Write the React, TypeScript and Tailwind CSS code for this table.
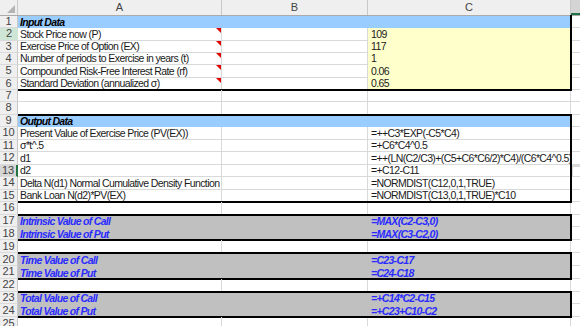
import React from "react";

type Row = {
  a?: string;
  c?: string;
  kind?: "head" | "input" | "plain" | "total";
};

const rows: Row[] = [
  { a: "Input Data", kind: "head" },
  { a: "Stock Price now (P)", c: "109", kind: "input" },
  { a: "Exercise Price of Option (EX)", c: "117", kind: "input" },
  { a: "Number of periods to Exercise in years (t)", c: "1", kind: "input" },
  { a: "Compounded Risk-Free Interest Rate (rf)", c: "0.06", kind: "input" },
  { a: "Standard Deviation (annualized σ)", c: "0.65", kind: "input" },
  {},
  {},
  { a: "Output Data", kind: "head" },
  { a: "Present Value of Exercise Price (PV(EX))", c: "=++C3*EXP(-C5*C4)", kind: "plain" },
  { a: "σ*t^.5", c: "=+C6*C4^0.5", kind: "plain" },
  { a: "d1", c: "=++(LN(C2/C3)+(C5+C6*C6/2)*C4)/(C6*C4^0.5)", kind: "plain" },
  { a: "d2", c: "=+C12-C11", kind: "plain" },
  { a: "Delta N(d1) Normal Cumulative Density Function", c: "=NORMDIST(C12,0,1,TRUE)", kind: "plain" },
  { a: "Bank Loan  N(d2)*PV(EX)", c: "=NORMDIST(C13,0,1,TRUE)*C10", kind: "plain" },
  {},
  { a: "Intrinsic Value of Call", c: "=MAX(C2-C3,0)", kind: "total" },
  { a: "Intrinsic Value of Put", c: "=MAX(C3-C2,0)", kind: "total" },
  {},
  { a: "Time Value of Call", c: "=C23-C17", kind: "total" },
  { a: "Time Value of Put", c: "=C24-C18", kind: "total" },
  {},
  { a: "Total Value of Call", c: "=+C14*C2-C15", kind: "total" },
  { a: "Total Value of Put", c: "=+C23+C10-C2", kind: "total" },
  {},
];

// row heights drift a little down the sheet, like the screenshot
const rowH = (n: number) => (n <= 8 ? "h-[12.33px]" : n <= 16 ? "h-[12.5px]" : "h-[12.83px]");

// blocks with the heavy black frame: [first row, last row, has top edge]
const blocks: [number, number, boolean][] = [
  [1, 6, false],
  [9, 15, true],
  [17, 18, true],
  [20, 21, true],
  [23, 24, true],
];

const CommentMark = () => (
  <svg width="5" height="5" viewBox="0 0 5 5" className="absolute top-0 right-0">
    <polygon points="0,0 5,0 5,5" fill="#e00000" />
  </svg>
);

function SheetRow({ row, n }: { row: Row; n: number }) {
  const h = rowH(n);
  const grid = "border-r border-b border-[#d9d9d9]";
  if (row.kind === "head") {
    return (
      <div className={`flex ${h} bg-[#99ccff]`}>
        <div className="w-[553px] flex items-end pl-[2px] font-bold italic tracking-[-0.7px] text-black">
          {row.a}
        </div>
      </div>
    );
  }
  if (row.kind === "total") {
    return (
      <div className={`flex ${h} bg-[#c0c0c0] text-[#2b2bff] font-bold italic tracking-[-0.7px]`}>
        <div className="w-[350px] flex items-end pl-[2px]">{row.a}</div>
        <div className="w-[203px] flex items-end pl-[3px]">{row.c}</div>
      </div>
    );
  }
  return (
    <div className={`flex ${h}`}>
      <div className={`relative w-[204px] flex items-end pl-[2px] whitespace-nowrap ${grid}`}>
        {row.a}
        {row.kind === "input" && <CommentMark />}
      </div>
      <div className={`w-[146px] ${grid}`} />
      <div
        className={`w-[203px] flex items-end pl-[3px] whitespace-nowrap ${
          row.kind === "input" ? "bg-[#ffffcc] border-b border-transparent" : grid
        }`}
      >
        {row.c}
      </div>
    </div>
  );
}

function Block({ from, to, top }: { from: number; to: number; top: boolean }) {
  return (
    <div
      className={`relative after:content-[''] after:pointer-events-none after:absolute after:left-0 after:-top-px after:-bottom-px after:-right-px after:border-r-2 after:border-b-2 after:border-black ${
        top ? "after:border-t-2" : ""
      }`}
    >
      {rows.slice(from - 1, to).map((r, i) => (
        <SheetRow key={from + i} row={r} n={from + i} />
      ))}
    </div>
  );
}

export default function App() {
  const sections: React.ReactNode[] = [];
  let n = 1;
  while (n <= rows.length) {
    const b = blocks.find((x) => x[0] === n);
    if (b) {
      sections.push(<Block key={n} from={b[0]} to={b[1]} top={b[2]} />);
      n = b[1] + 1;
    } else {
      sections.push(<SheetRow key={n} row={rows[n - 1]} n={n} />);
      n++;
    }
  }

  return (
    <div className="w-[580px] h-[326px] overflow-hidden bg-white text-[10.5px] leading-[11px] tracking-[-0.6px] text-[#1a1a1a] font-['Liberation_Sans',Arial,sans-serif]">
      {/* column headers */}
      <div className="flex h-[16px] bg-[#efefef] text-[#444] text-[11px] tracking-normal border-b border-[#ababab]">
        <div className="relative w-[18px] border-r border-[#c8c8c8]">
          <svg width="8" height="8" viewBox="0 0 8 8" className="absolute right-[2px] bottom-[2px]">
            <polygon points="8,0 8,8 0,8" fill="#b4b4b4" />
          </svg>
        </div>
        <div className="w-[204px] flex items-center justify-center border-r border-[#c8c8c8]">A</div>
        <div className="w-[146px] flex items-center justify-center border-r border-[#c8c8c8]">B</div>
        <div className="w-[203px] flex items-center justify-center border-r border-[#c8c8c8]">C</div>
        <div className="flex-1 bg-[#d4d4d4] border-b-2 border-[#217346]" />
      </div>

      <div className="flex">
        {/* row numbers */}
        <div className="w-[18px] shrink-0 bg-[#efefef] text-[#444] text-[11px] tracking-normal">
          {rows.map((_, i) => {
            const r = i + 1;
            const tone =
              r === 2
                ? "bg-[#cfe6d6]"
                : r === 13
                ? "bg-[#d6d6d6] border-r-2 border-r-[#217346]"
                : "border-r border-r-[#c8c8c8]";
            return (
              <div
                key={r}
                className={`${rowH(r)} flex items-center justify-center border-b border-b-[#dadada] ${tone}`}
              >
                {r}
              </div>
            );
          })}
        </div>

        {/* columns A to C */}
        <div className="w-[553px] shrink-0">{sections}</div>

        {/* column D, cut off at the window edge */}
        <div className="flex-1">
          {rows.map((_, i) => {
            const r = i + 1;
            return (
              <div
                key={r}
                className={`${rowH(r)} border-b border-[#d9d9d9] ${
                  r === 13 ? "border-y-2 border-l-2 border-[#217346]" : ""
                }`}
              />
            );
          })}
        </div>
      </div>
    </div>
  );
}
